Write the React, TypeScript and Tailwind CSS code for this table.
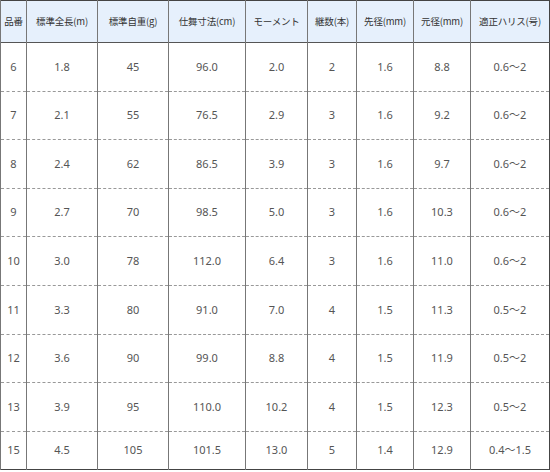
const headers = [
  { label: "品番", w: "w-[26px]" },
  { label: "標準全長(m)", w: "w-[71px]" },
  { label: "標準自重(g)", w: "w-[71px]" },
  { label: "仕舞寸法(cm)", w: "w-[77px]" },
  { label: "モーメント", w: "w-[62px]" },
  { label: "継数(本)", w: "w-[49px]" },
  { label: "先径(mm)", w: "w-[57px]" },
  { label: "元径(mm)", w: "w-[57px]" },
  { label: "適正ハリス(号)", w: "w-[79px]" },
];

const rows = [
  ["6", "1.8", "45", "96.0", "2.0", "2", "1.6", "8.8", "0.6〜2"],
  ["7", "2.1", "55", "76.5", "2.9", "3", "1.6", "9.2", "0.6〜2"],
  ["8", "2.4", "62", "86.5", "3.9", "3", "1.6", "9.7", "0.6〜2"],
  ["9", "2.7", "70", "98.5", "5.0", "3", "1.6", "10.3", "0.6〜2"],
  ["10", "3.0", "78", "112.0", "6.4", "3", "1.6", "11.0", "0.6〜2"],
  ["11", "3.3", "80", "91.0", "7.0", "4", "1.5", "11.3", "0.5〜2"],
  ["12", "3.6", "90", "99.0", "8.8", "4", "1.5", "11.9", "0.5〜2"],
  ["13", "3.9", "95", "110.0", "10.2", "4", "1.5", "12.3", "0.5〜2"],
  ["15", "4.5", "105", "101.5", "13.0", "5", "1.4", "12.9", "0.4〜1.5"],
];

export default function App() {
  return (
    <div className="w-[550px] h-[472px] bg-white overflow-hidden">
      <table
        className="w-[550px] table-fixed border-collapse border border-[#444] text-center"
        style={{ fontFamily: '"Noto Sans", "Noto Sans CJK JP", sans-serif' }}
      >
        <thead>
          <tr className="h-[42px] bg-[#e6f0fc] border-b border-[#555]">
            {headers.map((h) => (
              <th
                key={h.label}
                className={`${h.w} border-l border-[#777] p-0 font-normal text-[9.5px] text-[#333] whitespace-nowrap tracking-[-0.2px]`}
                style={{ fontFamily: '"Noto Sans CJK JP", sans-serif' }}
              >
                {h.label}
              </th>
            ))}
          </tr>
        </thead>
        <tbody>
          {rows.map((r, i) => (
            <tr
              key={r[0]}
              className={`${i === rows.length - 1 ? "h-[38px]" : "h-[48.6px] border-b border-dashed border-[#999]"}`}
            >
              {r.map((c, j) => (
                <td
                  key={j}
                  className="border-l border-[#777] p-0 text-[11px] text-[#555] whitespace-nowrap"
                >
                  {c}
                </td>
              ))}
            </tr>
          ))}
        </tbody>
      </table>
    </div>
  );
}
